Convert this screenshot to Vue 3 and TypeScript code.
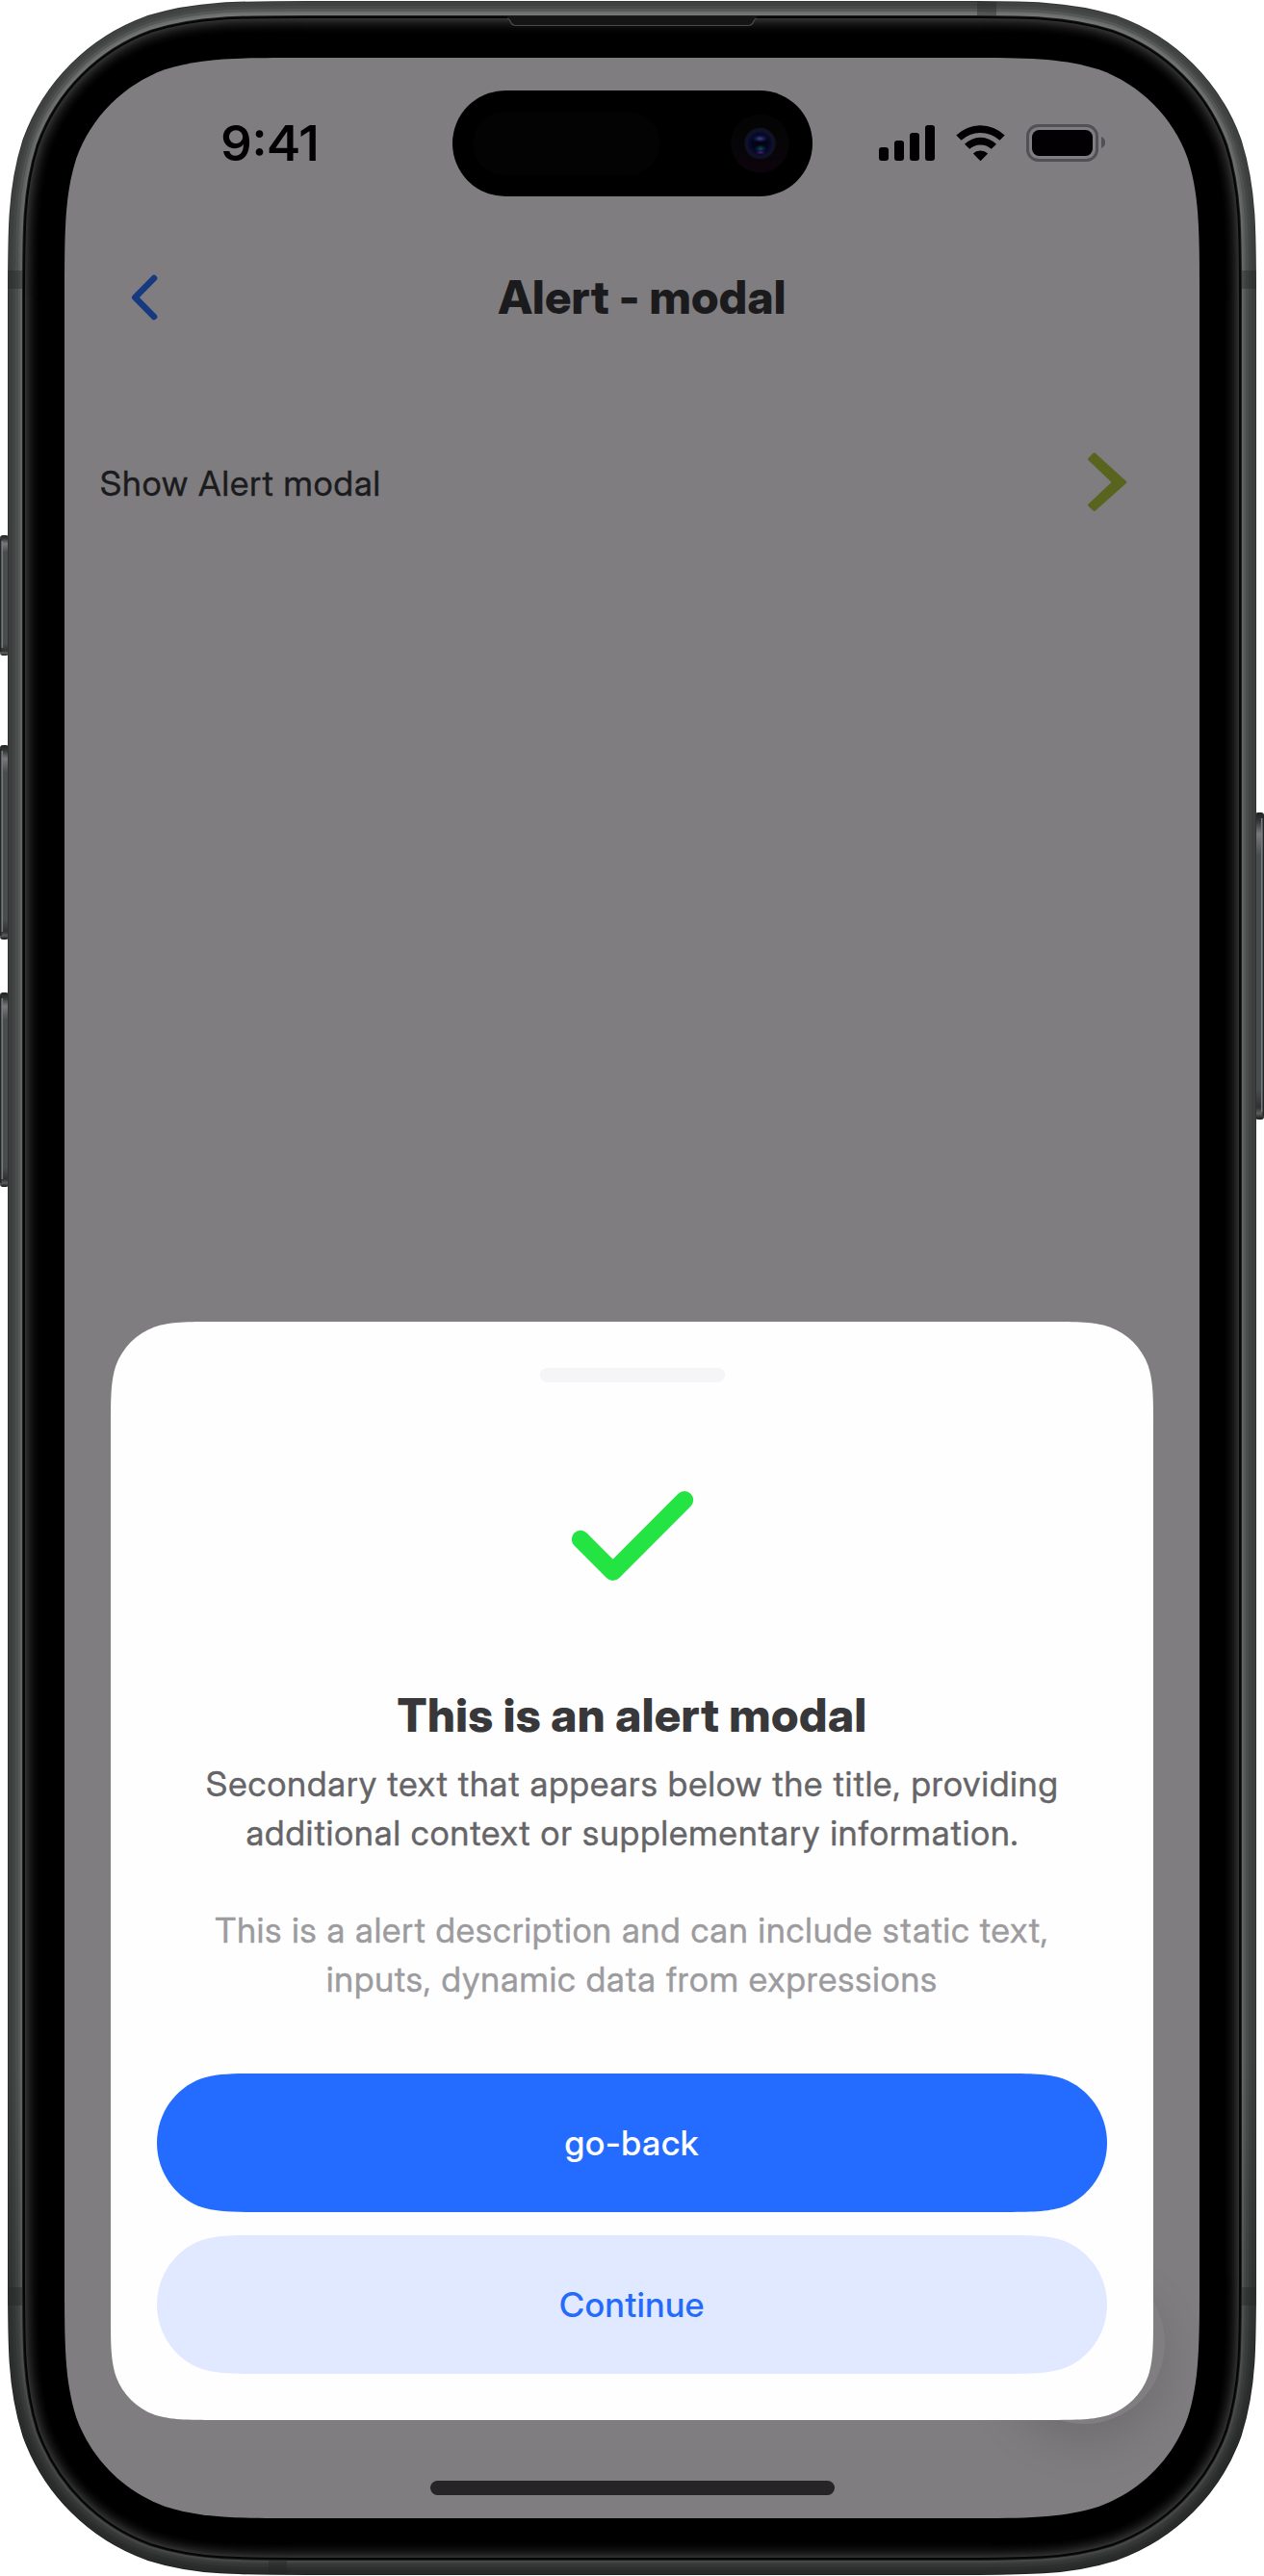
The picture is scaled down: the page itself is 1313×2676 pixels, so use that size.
<script setup lang="ts">
/** Rounded rectangle with continuous-curvature corners. */
function smoothRect(w: number, h: number, r: number, x = 0, y = 0): string {
  const corners: Array<[number, number, number, number, boolean]> = [
    [x + w, y, -1, 1, true],
    [x + w, y + h, -1, -1, false],
    [x, y + h, 1, -1, true],
    [x, y, 1, 1, false],
  ]
  const capsule = h < 3 * r
  const half: Array<[number, number]> = capsule
    ? [[1.528665, 0], [1.08849, 0], [0.868407, 0], [0.631494, 0.074911], [0.27, 0.21], [0, 0.57], [0, 1]]
    : [
        [1.528665, 0], [1.08849, 0], [0.868407, 0], [0.631494, 0.074911], [0.372824, 0.16906],
        [0.16906, 0.372824], [0.074911, 0.631494], [0, 0.868407], [0, 1.08849], [0, 1.528665],
      ]
  let d = ''
  corners.forEach(([cx, cy, sx, sy, forward]) => {
    const pts = (forward ? half : [...half].reverse()).map(
      ([px, py]) => `${(cx + sx * px * r).toFixed(2)} ${(cy + sy * py * r).toFixed(2)}`,
    )
    d += `${d ? 'L' : 'M'}${pts[0]}`
    for (let i = 1; i < pts.length; i += 3) d += `C${pts[i]} ${pts[i + 1]} ${pts[i + 2]}`
  })
  return d + 'Z'
}

const screenOutline = smoothRect(1179, 2556, 165, 67, 60)
const screenClip = { clipPath: `path('${smoothRect(1179, 2556, 165)}')` }
const sheetClip = { clipPath: `path('${smoothRect(1083, 1141, 72)}')` }
const buttonClip = { clipPath: `path('${smoothRect(987, 144, 72)}')` }

const metal = [
  { width: 118, stroke: 'url(#m0)' },
  { width: 116, stroke: 'url(#m1)' },
  { width: 108, stroke: 'url(#m2)' },
  { width: 102, stroke: 'url(#m3)' },
  { width: 96, stroke: 'url(#m4)' },
  { width: 92, stroke: 'url(#m5)' },
  { width: 88, stroke: '#1b1d1c' },
  { width: 86, stroke: '#050505' },
]
const glow = Array.from({ length: 17 }, (_, i) => {
  const v = Math.round(48 * Math.pow(1 - i / 17, 2))
  return { width: 82 - i * 2, stroke: `rgb(${v},${v},${v})` }
})
const tones = [
  ['#343635', '#303231', '#1f2120'],
  ['#414342', '#3c3e3d', '#292b2a'],
  ['#484a49', '#434544', '#2d2f2e'],
  ['#575958', '#4c4e4d', '#343635'],
  ['#6d6f6e', '#575958', '#3b3d3c'],
  ['#757776', '#626463', '#464847'],
]
const sideButtons = [
  { x: 0, y: 556, h: 125 },
  { x: 0, y: 774, h: 202 },
  { x: 0, y: 1031, h: 202 },
  { x: 1304, y: 844, h: 319 },
]
const bands = [
  { x: 8, y: 281, w: 15, h: 19 },
  { x: 1290, y: 281, w: 15, h: 19 },
  { x: 8, y: 2376, w: 16, h: 19 },
  { x: 1289, y: 2376, w: 16, h: 19 },
  { x: 1015, y: 2, w: 20, h: 15 },
  { x: 279, y: 2659, w: 19, h: 15 },
]
</script>

<template>
  <main class="device">
    <svg class="bezel" width="1313" height="2676" viewBox="0 0 1313 2676" aria-hidden="true">
      <defs>
        <linearGradient
          v-for="(t, i) in tones" :id="'m' + i" :key="i"
          gradientUnits="userSpaceOnUse" x1="0" y1="0" x2="0" y2="2676"
        >
          <stop offset="0" :stop-color="t[0]" />
          <stop offset="0.12" :stop-color="t[1]" />
          <stop offset="0.8" :stop-color="t[1]" />
          <stop offset="0.95" :stop-color="t[2]" />
        </linearGradient>
        <linearGradient id="key" x1="0" y1="0" x2="0" y2="1">
          <stop offset="0" stop-color="#202223" />
          <stop offset="0.03" stop-color="#36393a" />
          <stop offset="0.07" stop-color="#77797d" />
          <stop offset="0.14" stop-color="#4a4d4e" />
          <stop offset="0.9" stop-color="#4a4d4e" />
          <stop offset="0.96" stop-color="#2f3132" />
          <stop offset="0.98" stop-color="#5a5c5d" />
          <stop offset="1" stop-color="#151617" />
        </linearGradient>
      </defs>
      <g v-for="b in sideButtons" :key="b.x + '-' + b.y">
        <rect :x="b.x" :y="b.y" width="9" :height="b.h" rx="3" fill="url(#key)" />
        <rect :x="b.x ? 1311.5 : 0" :y="b.y + 4" width="1.5" :height="b.h - 8" fill="#242626" />
        <rect :x="b.x ? 1310 : 1.5" :y="b.y + 6" width="1.5" :height="b.h - 14" fill="#777a7b" />
      </g>
      <g fill="none">
        <path v-for="(s, i) in metal" :key="i" :d="screenOutline" :stroke="s.stroke" :stroke-width="s.width" />
        <path v-for="(s, i) in glow" :key="'g' + i" :d="screenOutline" :stroke="s.stroke" :stroke-width="s.width" />
      </g>
      <g v-for="(b, i) in bands" :key="i">
        <rect :x="b.x" :y="b.y" :width="b.w" :height="b.h" fill="#222524" fill-opacity="0.4" />
      </g>
      <path d="M527 17H786V19.5Q783.5 19.5 782.5 23Q781 26.5 777 26.5H536Q532 26.5 530.5 23Q529.5 19.5 527 19.5Z" fill="#151515" />
      <path d="M527 19.5Q529.5 19.5 530.5 23Q532 26.5 536 26.5H777Q781 26.5 782.5 23Q783.5 19.5 786 19.5" fill="none" stroke="#4a4a4a" stroke-width="1.2" />
    </svg>

    <div class="screen" :style="screenClip">
      <div class="status">
        <span class="time">9:41</span>
        <svg width="235" height="40" viewBox="913 128 235 40" aria-hidden="true">
          <g fill="#020003">
            <rect x="913" y="152" width="10" height="14" rx="3" />
            <rect x="929" y="145" width="10" height="21" rx="3" />
            <rect x="945" y="137" width="10" height="29" rx="3" />
            <rect x="961" y="129" width="10" height="37" rx="3" />
            <path d="M993.3 139.5A36 36 0 0 1 1043.7 139.5L1038.5 144.7A29.5 29.5 0 0 0 998.5 144.7Z" />
            <path d="M1002 148.7A23.3 23.3 0 0 1 1035 148.7L1029.8 153.8A17 17 0 0 0 1007.2 153.8Z" />
            <path d="M1010.8 158.4A11.5 11.5 0 0 1 1026.2 158.4L1018.5 166.2Z" />
            <rect x="1072" y="134" width="63" height="27" rx="7.5" />
          </g>
          <rect x="1067.5" y="129.5" width="72" height="36" rx="11" fill="none" stroke="#525054" stroke-width="3" />
          <path d="M1144 141Q1148.2 143 1148.2 147T1144 153Z" fill="#525054" />
        </svg>
        <div class="island">
          <svg width="374" height="110" viewBox="469.5 94 374 110" aria-hidden="true">
            <defs>
              <linearGradient id="ring" x1="0" y1="0" x2="0" y2="1">
                <stop offset="0" stop-color="#040404" />
                <stop offset="0.5" stop-color="#060507" />
                <stop offset="1" stop-color="#0d040d" />
              </linearGradient>
              <radialGradient id="lens">
                <stop offset="0" stop-color="#02020c" />
                <stop offset="0.5" stop-color="#04051c" />
                <stop offset="0.72" stop-color="#080b30" />
                <stop offset="0.82" stop-color="#101226" />
                <stop offset="1" stop-color="#0f1122" />
              </radialGradient>
              <radialGradient id="hi"><stop offset="0" stop-color="#3f4690" /><stop offset="1" stop-color="#20286e" stop-opacity="0" /></radialGradient>
              <radialGradient id="lo"><stop offset="0" stop-color="#0d4f58" /><stop offset="1" stop-color="#0b2c4c" stop-opacity="0" /></radialGradient>
              <radialGradient id="vi"><stop offset="0" stop-color="#581e6c" /><stop offset="1" stop-color="#40106a" stop-opacity="0" /></radialGradient>
            </defs>
            <rect x="490.5" y="116" width="194.5" height="66" rx="33" fill="#030303" />
            <circle cx="789" cy="149" r="30.3" fill="url(#ring)" />
            <circle cx="789" cy="149" r="16.2" fill="url(#lens)" />
            <ellipse cx="789" cy="144" rx="8" ry="4" fill="url(#hi)" />
            <ellipse cx="789.5" cy="154.5" rx="6.5" ry="4.5" fill="url(#lo)" />
            <ellipse cx="789.5" cy="158.5" rx="5.5" ry="2.2" fill="url(#vi)" />
          </svg>
        </div>
      </div>

      <header class="header">
        <button class="back" aria-label="Back">
          <svg width="72" height="72" viewBox="115 273 72 72">
            <path d="M160 289L140.3 309L160 329" fill="none" stroke="#17397f" stroke-width="6.6" stroke-linecap="round" stroke-linejoin="round" />
          </svg>
        </button>
        <h1>Alert - modal</h1>
      </header>

      <div class="row">
        <span>Show Alert modal</span>
        <svg width="44" height="64" viewBox="1128 469 44 64" aria-hidden="true">
          <path d="M1136.7 472L1168.5 501L1136.7 529.3L1131.9 524.7L1157 501L1131.9 477Z" fill="#59641f" stroke="#59641f" stroke-width="3.4" stroke-linejoin="round" />
        </svg>
      </div>

      <div class="fab"></div>

      <section class="sheet" role="dialog" :style="sheetClip">
        <div class="handle"></div>
        <svg class="check" width="144" height="144" viewBox="585.3 1524 144 144" aria-hidden="true">
          <path d="M603.3 1599L637 1632.7L711.3 1558.3" fill="none" stroke="#24e444" stroke-width="18.4" stroke-linecap="round" stroke-linejoin="round" />
        </svg>
        <h2>This is an alert modal</h2>
        <p class="secondary">Secondary text that appears below the title, providing<br />additional context or supplementary information.</p>
        <p class="description">This is a alert description and can include static text,<br />inputs, dynamic data from expressions</p>
        <div class="actions">
          <button class="primary" :style="buttonClip">go-back</button>
          <button class="tonal" :style="buttonClip">Continue</button>
        </div>
      </section>
      <div class="home"></div>
    </div>
  </main>
</template>

<style>
body {
  background: #fff;
}
</style>

<style scoped>
.device {
  position: relative;
  box-sizing: border-box;
  width: 1313px;
  height: 2676px;
  padding: 60px 67px;
  font-family: "Inter Display", Inter, "Liberation Sans", sans-serif;
  font-variation-settings: "opsz" 32;
}
.bezel {
  position: absolute;
  inset: 0;
}
.screen {
  position: relative;
  width: 1179px;
  height: 2556px;
  background: #7f7d80;
}
.status {
  position: relative;
  box-sizing: border-box;
  display: flex;
  align-items: center;
  justify-content: space-between;
  height: 177px;
  padding: 0 98px 0 163px;
}
.time {
  font-size: 51px;
  font-weight: 600;
  line-height: 60px;
  letter-spacing: 2.7px;
  font-feature-settings: "calt" 1;
  color: #020003;
}
.island {
  position: absolute;
  left: 402.5px;
  top: 34px;
  width: 374px;
  height: 110px;
  border-radius: 55px;
  background: #000;
}
.island svg {
  display: block;
}
.header {
  display: flex;
  align-items: center;
  height: 144px;
  padding: 0 99px 0 48px;
}
button {
  padding: 0;
  border: 0;
  background: none;
  font: inherit;
}
.back svg {
  display: block;
}
h1,
h2 {
  margin: 0;
  font-size: 48px;
  font-weight: 800;
  line-height: 60px;
  text-align: center;
  white-space: nowrap;
}
h1 {
  flex: 1;
  letter-spacing: 0.25px;
  color: #1b1b1d;
}
.row {
  display: flex;
  align-items: center;
  justify-content: space-between;
  height: 144px;
  margin-top: 48px;
  padding: 0 74px 0 37px;
  font-size: 36px;
  letter-spacing: 1px;
  color: #1b1b1d;
  -webkit-text-stroke: 0.4px currentColor;
}
.row span {
  padding-top: 1px;
}
.fab {
  position: absolute;
  right: 36px;
  bottom: 98px;
  width: 168px;
  height: 168px;
  border-radius: 50%;
  background: #807e81;
  box-shadow: 0 20px 48px rgba(0, 0, 0, 0.13);
}
.sheet {
  position: absolute;
  left: 48px;
  top: 1313px;
  box-sizing: border-box;
  display: flex;
  flex-direction: column;
  align-items: center;
  width: 1083px;
  height: 1141px;
  padding: 48px;
  background: #fefefe;
}
.handle {
  width: 192px;
  height: 15px;
  border-radius: 8px;
  background: #f5f5f8;
}
.check {
  display: block;
  margin-top: 88px;
}
h2 {
  margin-top: 84px;
  letter-spacing: 0.45px;
  color: #38383a;
}
p {
  margin: 0;
  font-size: 36px;
  line-height: 51px;
  text-align: center;
  white-space: nowrap;
  -webkit-text-stroke: 0.4px currentColor;
}
.secondary {
  margin-top: 16px;
  padding-left: 1px;
  letter-spacing: 1.02px;
  color: #656467;
}
.description {
  margin-top: 50px;
  letter-spacing: 0.95px;
  color: #9c9b9e;
}
.actions {
  display: flex;
  flex-direction: column;
  gap: 24px;
  width: 987px;
  margin-top: 72px;
}
.actions button {
  height: 144px;
  font-size: 36px;
  font-weight: 500;
  letter-spacing: 0.75px;
}
.primary {
  background: #246bff;
  color: #fff;
}
.actions .tonal {
  background: #e0e9ff;
  color: #246bfd;
  letter-spacing: 0.6px;
}
.home {
  position: absolute;
  left: 380px;
  bottom: 24px;
  width: 420px;
  height: 15px;
  border-radius: 8px;
  background: #262427;
}
</style>
